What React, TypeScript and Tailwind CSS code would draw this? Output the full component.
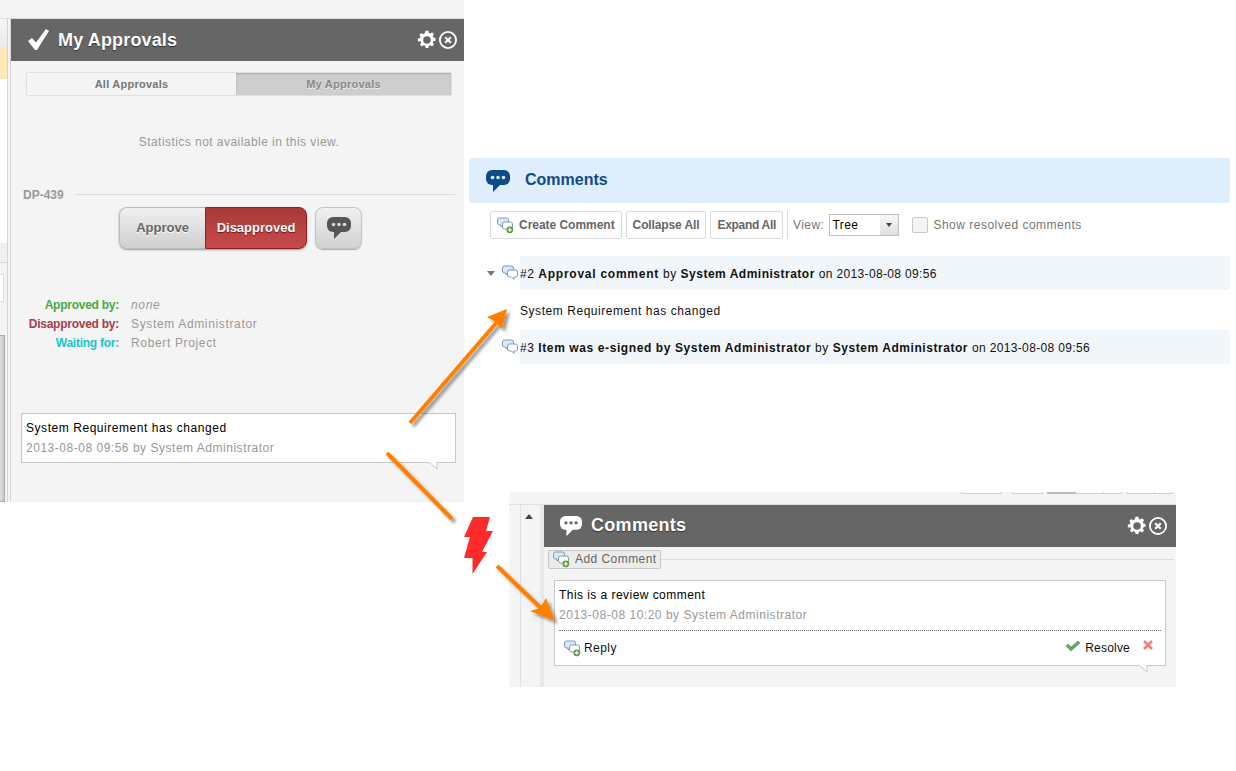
import React from "react";

const GEAR =
  "M10.300 1h3.400l.5 2.600c.6.2 1.200.4 1.700.7l2.200-1.500 2.400 2.400-1.500 2.200c.3.500.5 1.100.7 1.700l2.600.5v3.400l-2.600.5c-.2.600-.4 1.200-.7 1.700l1.500 2.200-2.400 2.400-2.200-1.500c-.5.300-1.100.5-1.700.7l-.5 2.600h-3.400l-.5-2.600c-.6-.2-1.200-.4-1.700-.7l-2.200 1.500-2.400-2.400 1.500-2.200c-.3-.5-.5-1.100-.7-1.700L1 13.700v-3.400l2.600-.5c.2-.6.400-1.200.7-1.700L2.800 5.900l2.400-2.400 2.200 1.500c.5-.3 1.100-.5 1.700-.7z";

const GearClose = () => (
  <div className="flex items-center gap-[1px]">
    <svg width="20" height="20" viewBox="0 0 24 24">
      <path fillRule="evenodd" fill="#fff" d={GEAR + "M12 7.500a4.500 4.500 0 1 0 0 9 4.500 4.500 0 0 0 0-9z"} />
    </svg>
    <svg width="20" height="20" viewBox="0 0 20 20" fill="none" stroke="#fff">
      <circle cx="10" cy="10" r="8.100" strokeWidth="1.800" />
      <path d="M7.200 7.200l5.600 5.600M12.800 7.200l-5.600 5.600" strokeWidth="2.300" />
    </svg>
  </div>
);

const Bubble = ({ fill, dot, width }: { fill: string; dot: string; width: number }) => (
  <svg width={width} height={(width * 22) / 24} viewBox="0 0 24 22" className="shrink-0">
    <rect width="24" height="15" rx="6" fill={fill} />
    <path d="M7 14v8l8-8z" fill={fill} />
    <circle cx="6.500" cy="7.500" r="1.800" fill={dot} />
    <circle cx="12" cy="7.500" r="1.800" fill={dot} />
    <circle cx="17.500" cy="7.500" r="1.800" fill={dot} />
  </svg>
);

// two little overlapping speech bubbles, used on comment rows
const CommentsIcon = ({ plus = false }: { plus?: boolean }) => (
  <svg width="17" height="17" viewBox="0 0 17 17" className="shrink-0">
    <path d="M2.500 1h7a2 2 0 0 1 2 2v3a2 2 0 0 1-2 2H6L4 10V8H2.500a2 2 0 0 1-2-2V3a2 2 0 0 1 2-2z" fill="#dbe8f5" stroke="#7d9cc0" />
    <path d="M7.500 5h6a2 2 0 0 1 2 2v3a2 2 0 0 1-2 2H12v2.500L9.500 12h-2a2 2 0 0 1-2-2V7a2 2 0 0 1 2-2z" fill="#fff" stroke="#7d9cc0" />
    {plus && (
      <>
        <circle cx="12.800" cy="12.800" r="3.400" fill="#5a9a3c" />
        <path d="M12.800 10.800v4M10.800 12.800h4" stroke="#fff" strokeWidth="1.200" />
      </>
    )}
  </svg>
);

const Tail = () => (
  <svg width="10" height="8" viewBox="0 0 10 8" className="absolute bottom-[-8px] right-[16px]">
    <path d="M0 0L8 7V0" fill="#fff" />
    <path d="M0 0L8 7V0" fill="none" stroke="#c8c8c8" />
    <path d="M0.500 0H7.500" stroke="#fff" strokeWidth="1.500" />
  </svg>
);

const ToolButton = ({ className = "", children }: { className?: string; children: React.ReactNode }) => (
  <div className={"flex h-7 items-center gap-[5px] rounded-[2px] border border-[#dcdcdc] bg-white px-[6px] text-[12px] font-bold text-[#666] " + className}>
    {children}
  </div>
);

const MyApprovals = () => (
  <div className="absolute left-0 top-0 flex h-[502px] w-[464px] flex-col bg-[#f4f4f4]">
    <div className="h-[19px] shrink-0 border-b border-[#dcdcdc]" />
    <div className="flex flex-1">
      {/* sliver of the page behind the panel */}
      <div className="flex w-[10px] shrink-0 flex-col">
        <div className="flex w-[8px] flex-1 flex-col border-r border-[#d4d4d4]">
          <div className="h-[29px] bg-gradient-to-b from-[#f5f5f5] to-[#eaeaea]" />
          <div className="h-[31px] bg-[#fde9ba]" />
          <div className="h-[164px] bg-white" />
          <div className="h-[20px] border-b border-[#d8d8d8] bg-[#f0f0f0]" />
          <div className="h-[72px] pt-[11px]">
            <div className="h-[28px] w-[4px] border-y border-r border-[#dddddd] bg-white" />
          </div>
          <div className="mr-[2px] flex-1 border-y border-r border-[#aaa] bg-gradient-to-r from-[#dedede] to-[#c8c8c8]" />
        </div>
      </div>
      <div className="flex min-w-0 flex-1 flex-col border-l border-[#d4d4d4]">
        <div className="flex h-[42px] items-center bg-[#666] pl-[17px] pr-[6px] text-white">
          <svg width="22" height="22" viewBox="0 0 22 22" className="shrink-0">
            <path d="M0 12l4-3 4 4.500L18 0l3 2L9 21H7z" fill="#fff" />
          </svg>
          <span className="ml-[8px] flex-1 text-[18px] font-bold tracking-[0.15px] [text-shadow:0_1px_1px_#333]">My Approvals</span>
          <GearClose />
        </div>
        <div className="ml-[15px] mr-[12px] mt-[11px] flex h-[24px] rounded-[2px] border border-[#dfdfdf] text-[11px] font-bold tracking-[0.25px] text-[#777]">
          <div className="flex flex-1 items-center justify-center">All Approvals</div>
          <div className="flex w-[215px] items-center justify-center bg-[#cecece] text-[#888] shadow-[inset_0_1px_2px_#aaa] [text-shadow:0_1px_0_#eee]">My Approvals</div>
        </div>
        <div className="mt-[39px] pl-[3px] text-center text-[12px] leading-[15px] tracking-[0.45px] text-[#999]">
          Statistics not available in this view.
        </div>
        <div className="ml-[12px] mr-[9px] mt-[36px] flex items-center gap-[11px]">
          <span className="text-[12px] font-bold text-[#999]">DP-439</span>
          <div className="-mt-[1px] h-px flex-1 bg-[#dcdcdc]" />
        </div>
        <div className="mt-[3px] flex justify-center pl-[6px]">
          <div className="flex h-[42px] w-[188px] rounded-[8px] text-[13px] font-bold shadow-[0_1px_2px_#999]">
            <div className="flex w-[86px] items-center justify-center rounded-l-[8px] border border-r-0 border-[#bbb] bg-gradient-to-b from-[#f0f0f0] to-[#cfcfcf] text-[#666] [text-shadow:0_1px_0_#fff]">
              Approve
            </div>
            <div className="flex flex-1 items-center justify-center rounded-r-[8px] border border-[#8f2020] bg-gradient-to-b from-[#a83a3a] to-[#c84a4a] text-white [text-shadow:0_1px_1px_#6b1515]">
              Disapproved
            </div>
          </div>
          <div className="ml-[8px] flex h-[42px] w-[47px] items-center justify-center rounded-[8px] border border-[#c4c4c4] bg-gradient-to-b from-[#f0f0f0] to-[#d2d2d2] shadow-[0_1px_1px_#aaa]">
            <Bubble fill="#555" dot="#d8d8d8" width={24} />
          </div>
        </div>
        <div className="mt-[49px] grid grid-cols-[108px_1fr] gap-x-[12px] gap-y-[4px] text-[12px] leading-[15px] tracking-[0.65px]">
          <span className="text-right font-bold tracking-[-0.25px] text-[#4aa84a]">Approved by:</span>
          <span className="italic text-[#999]">none</span>
          <span className="text-right font-bold tracking-[-0.25px] text-[#a83c4a]">Disapproved by:</span>
          <span className="text-[#999]">System Administrator</span>
          <span className="text-right font-bold tracking-[-0.25px] text-[#22c4cc]">Waiting for:</span>
          <span className="text-[#999]">Robert Project</span>
        </div>
        <div className="relative ml-[10px] mr-[8px] mt-[62px] h-[50px] border border-[#c8c8c8] bg-white px-[4px] pt-[4px] text-[12px] leading-[20px] tracking-[0.55px]">
          <div className="text-black">System Requirement has changed</div>
          <div className="tracking-[0.52px] text-[#999]">2013-08-08 09:56 by System Administrator</div>
          <Tail />
        </div>
      </div>
    </div>
  </div>
);

const CommentsSection = () => (
  <div className="absolute left-[469px] top-[158px] w-[761px]">
    <div className="flex h-[45px] items-center rounded-[3px] bg-[#dfeefd] pl-[17px]">
      <Bubble fill="#0d4a8c" dot="#dfeefd" width={24} />
      <span className="mb-[2px] ml-[15px] text-[16px] font-bold text-[#124a86]">Comments</span>
    </div>
    <div className="ml-[21px] mt-[8px] flex items-center gap-[4px]">
      <ToolButton className="tracking-[-0.03px]">
        <CommentsIcon plus />
        Create Comment
      </ToolButton>
      <ToolButton className="tracking-[-0.12px]">Collapse All</ToolButton>
      <ToolButton className="tracking-[-0.3px]">Expand All</ToolButton>
      <div className="h-7 w-px bg-[#d8d8d8]" />
      <span className="ml-[1px] text-[12px] tracking-[0.45px] text-[#777]">View:</span>
      <div className="ml-[1px] flex h-[22px] w-[70px] items-center justify-between border border-[#c0c0c0] pl-[2px] text-[12px] tracking-[0.45px] text-black">
        Tree
        <div className="flex h-full w-[18px] items-center justify-center bg-gradient-to-b from-[#f6f6f6] to-[#e0e0e0]">
          <div className="border-x-[3px] border-t-[4px] border-x-transparent border-t-[#444]" />
        </div>
      </div>
      <div className="ml-[9px] h-[16px] w-[16px] rounded-[2px] border border-[#c8c8c8] bg-[#f4f4f4]" />
      <span className="ml-[1px] text-[12px] tracking-[0.5px] text-[#777]">Show resolved comments</span>
    </div>
    <div className="mt-[17px] flex h-[34px] items-center text-[12px] tracking-[0.55px] text-[#111]">
      <div className="ml-[18px] mr-[7px] h-0 w-0 border-x-[4px] border-t-[5px] border-x-transparent border-t-[#777]" />
      <CommentsIcon />
      <div className="ml-[1px] flex h-full flex-1 items-center bg-[#f1f6fa] pt-[1px]">
        #2&nbsp;<b className="tracking-[0.75px]">Approval comment</b>&nbsp;by&nbsp;<b className="tracking-[0.5px]">System Administrator</b>&nbsp;<span className="tracking-[0.35px]">on 2013-08-08 09:56</span>
      </div>
    </div>
    <div className="flex h-[40px] items-center pl-[51px] pt-[1px] text-[12px] tracking-[0.55px] text-[#111]">
      System Requirement has changed
    </div>
    <div className="flex h-[34px] items-center pl-[33px] text-[12px] tracking-[0.55px] text-[#111]">
      <CommentsIcon />
      <div className="ml-[1px] flex h-full flex-1 items-center bg-[#f1f6fa] pt-[1px]">
        #3&nbsp;<b className="tracking-[0.6px]">Item was e-signed by System Administrator</b>&nbsp;by&nbsp;<b>System Administrator</b>&nbsp;<span className="tracking-[0.35px]">on 2013-08-08 09:56</span>
      </div>
    </div>
  </div>
);

const ReviewPanel = () => (
  <div className="absolute left-[509px] top-[492px] flex h-[195px] w-[667px] flex-col bg-[#f4f4f4] text-[12px] tracking-[0.45px]">
    {/* bottom edge of the pager, cut off by the crop */}
    <div className="absolute right-[3px] top-0 flex h-[2px] items-stretch">
      <div className="w-[41px] border-x border-b border-[#d0d0d0] bg-white" />
      <div className="ml-[10px] w-[31px] border-x border-b border-[#d0d0d0] bg-white" />
      <div className="ml-[4px] w-[29px] bg-[#bbb]" />
      <div className="w-[28px] border-r border-b border-[#d0d0d0] bg-white" />
      <div className="w-[18px] border-r border-b border-[#d0d0d0] bg-white" />
      <div className="ml-[5px] w-[28px] border-x border-b border-[#d0d0d0] bg-white" />
      <div className="w-[18px] border-r border-b border-[#d0d0d0] bg-white" />
    </div>
    <div className="h-[13px] shrink-0 border-b border-[#e0e0e0]" />
    <div className="flex flex-1">
      <div className="flex w-[35px] shrink-0">
        <div className="w-[12px] border-r border-[#e0e0e0]" />
        <div className="flex-1 pl-[4px] pt-[9px]">
          <div className="h-0 w-0 border-x-[4px] border-b-[5px] border-x-transparent border-b-[#444]" />
        </div>
        <div className="w-[4px] bg-[#e8e8e8]" />
      </div>
      <div className="flex min-w-0 flex-1 flex-col">
        <div className="flex h-[42px] items-center bg-[#666] pl-[16px] pr-[8px] text-white">
          <Bubble fill="#fff" dot="#666" width={22} />
          <span className="mb-[2px] ml-[9px] flex-1 text-[18px] font-bold tracking-[0.3px] [text-shadow:0_1px_1px_#333]">Comments</span>
          <GearClose />
        </div>
        <div className="ml-[4px] mr-[2px] mt-[3px] flex items-center">
          <div className="flex h-[19px] items-center gap-[5px] rounded-[2px] border border-[#c8c8c8] bg-[#ececec] pb-[1px] pl-[4px] pr-[3px] text-[#666]">
            <CommentsIcon plus />
            Add Comment
          </div>
          <div className="h-px flex-1 bg-[#dcdcdc]" />
        </div>
        <div className="relative mx-[10px] mt-[11px] h-[86px] border border-[#c8c8c8] bg-white px-[4px] pt-[4px] leading-[20px]">
          <div className="text-black">This is a review comment</div>
          <div className="tracking-[0.52px] text-[#999]">2013-08-08 10:20 by System Administrator</div>
          <div className="mt-[5px] flex items-center border-t border-dotted border-[#777] pl-[5px] pt-[7px] text-[#111]">
            <CommentsIcon plus />
            <span className="ml-[3px]">Reply</span>
            <svg width="16" height="12" viewBox="0 0 16 12" className="-mt-[4px] ml-auto mr-[4px]">
              <path d="M1 6l2-2 3 3 7-6 2 2-9 8z" fill="#5fa85f" stroke="#3f8f3f" strokeWidth="0.500" />
            </svg>
            <span className="mr-[13px] tracking-[0.2px]">Resolve</span>
            <svg width="10" height="10" viewBox="0 0 10 10" className="-mt-[6px] mr-[8px]">
              <path d="M1 1l8 8M9 1l-8 8" stroke="#f47c80" strokeWidth="2.500" />
            </svg>
          </div>
          <Tail />
        </div>
      </div>
    </div>
  </div>
);

const Arrows = () => (
  <svg width="1236" height="771" viewBox="0 0 1236 771" className="absolute left-0 top-0">
    <defs>
      <filter id="sh" x="-30%" y="-30%" width="160%" height="160%">
        <feDropShadow dx="3" dy="3" stdDeviation="1.500" floodColor="#000" floodOpacity="0.400" />
      </filter>
    </defs>
    <g filter="url(#sh)">
      <path d="M410 423L497 322" stroke="#ff8000" strokeWidth="4" fill="none" />
      <path d="M507 309L487 317 494 321 502 329z" fill="#ff8000" />
    </g>
    <g filter="url(#sh)">
      <path d="M387 453L452 519" stroke="#ff8000" strokeWidth="4" fill="none" />
    </g>
    <g filter="url(#sh)">
      <path d="M497 566L545 612" stroke="#ff8000" strokeWidth="4" fill="none" />
      <path d="M555 621L530 611 540 608 546 598z" fill="#ff8000" />
    </g>
    <path d="M473 517H490L486 531H493L482 552H487L472.500 574V558H464L470 537H464z" fill="#ff2a2a" />
  </svg>
);

export default function App() {
  return (
    <div className="relative h-[771px] w-[1236px] overflow-hidden bg-white font-['Liberation_Sans',Arial,sans-serif]">
      <MyApprovals />
      <CommentsSection />
      <ReviewPanel />
      <Arrows />
    </div>
  );
}
